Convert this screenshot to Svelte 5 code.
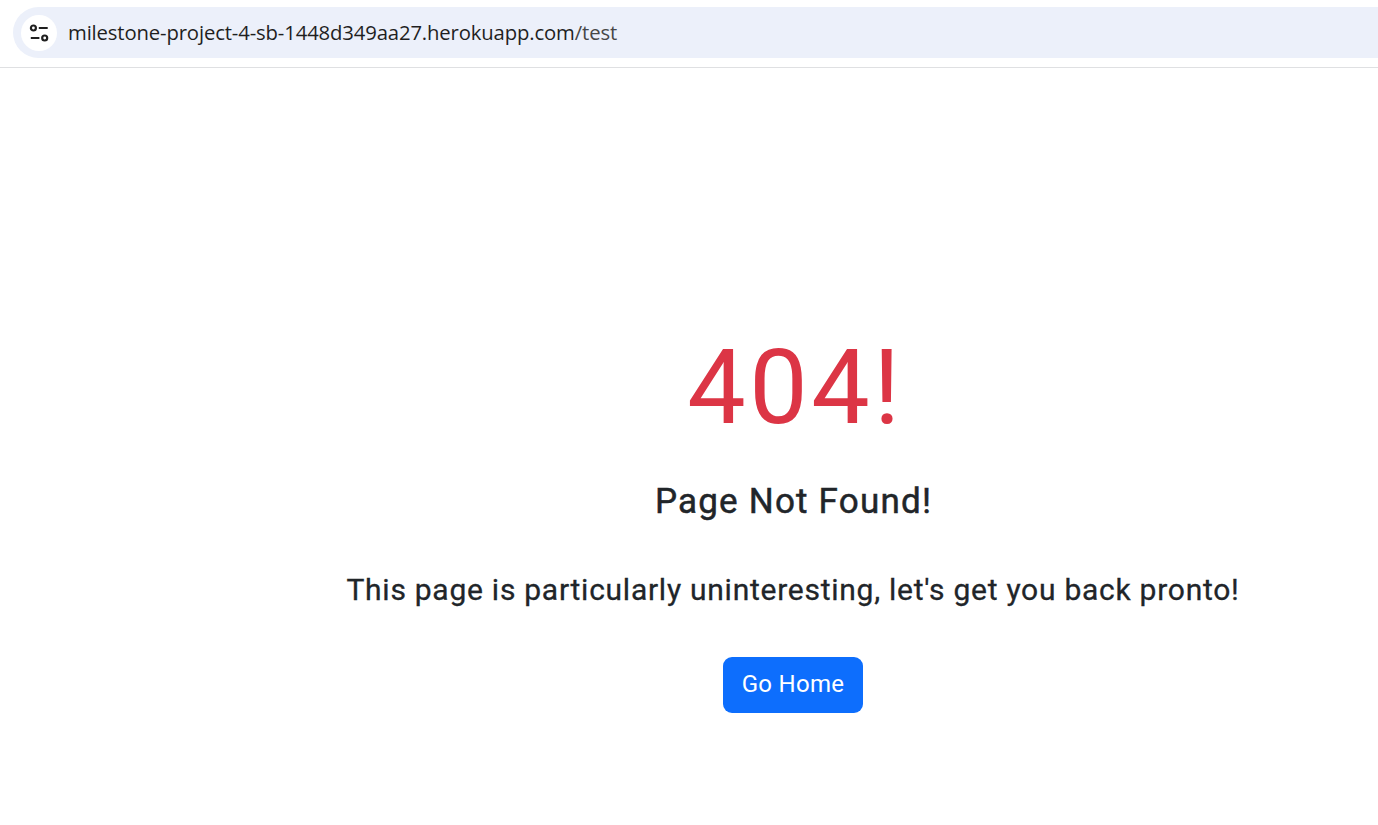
<script lang="ts">
  const host = 'milestone-project-4-sb-1448d349aa27.herokuapp.com';
  const path = '/test';
</script>

<div class="window">
  <header class="toolbar">
    <div class="address">
      <span class="site-info">
        <svg width="20" height="20" viewBox="0 0 20 20" fill="none" stroke="#1f1f1f" stroke-width="2.2">
          <circle cx="4.4" cy="5" r="2.5" />
          <path d="M9.8 5H18.7M1.8 15H10.4" />
          <circle cx="15.7" cy="15" r="2.5" />
        </svg>
      </span>
      <span class="url">{host}<span class="path">{path}</span></span>
    </div>
  </header>
  <main>
    <h1>404!</h1>
    <h2>Page Not Found!</h2>
    <p>This page is particularly uninteresting, let's get you back pronto!</p>
    <button>Go Home</button>
  </main>
</div>

<style>
  .window {
    height: 825px;
    overflow: hidden;
    background: #fff;
    box-sizing: border-box;
  }
  .toolbar {
    height: 68px;
    box-sizing: border-box;
    padding: 7px 0 0 13px;
    border-bottom: 1px solid #dfe0e2;
  }
  .address {
    height: 51px;
    display: flex;
    align-items: center;
    padding-left: 8px;
    box-sizing: border-box;
    background: #ecf0fa;
    border-radius: 26px 0 0 26px;
  }
  .site-info {
    width: 36px;
    height: 36px;
    border-radius: 50%;
    background: #fff;
    display: flex;
    align-items: center;
    justify-content: center;
  }
  .url {
    margin-left: 11px;
    padding-bottom: 1px;
    font: 400 20.3px/28px 'Open Sans', sans-serif;
    letter-spacing: -0.14px;
    color: #1f1f1f;
    white-space: nowrap;
  }
  .path {
    color: #474747;
  }
  main {
    padding: 260px 0 0 208px;
    display: flex;
    flex-direction: column;
    align-items: center;
    font-family: Roboto, sans-serif;
    color: #212529;
    white-space: nowrap;
  }
  h1,
  h2,
  p {
    margin: 0;
    font-weight: 400;
  }
  h1 {
    padding-left: 5px;
    font-size: 104px;
    line-height: 120px;
    letter-spacing: 3.6px;
    color: #dc3545;
  }
  h2 {
    margin-top: 31px;
    padding-left: 1px;
    font-size: 35px;
    line-height: 46px;
    letter-spacing: 1.2px;
    -webkit-text-stroke: 0.5px currentColor;
  }
  p {
    margin-top: 45px;
    font-size: 30px;
    line-height: 40px;
    letter-spacing: 0.74px;
    -webkit-text-stroke: 0.3px currentColor;
  }
  button {
    margin-top: 47px;
    width: 140px;
    height: 56px;
    padding: 0 0 2px;
    border: 0;
    border-radius: 9px;
    background: #0d6efd;
    color: #fff;
    font: 400 24px/36px Roboto, sans-serif;
    letter-spacing: 0.3px;
  }
</style>
